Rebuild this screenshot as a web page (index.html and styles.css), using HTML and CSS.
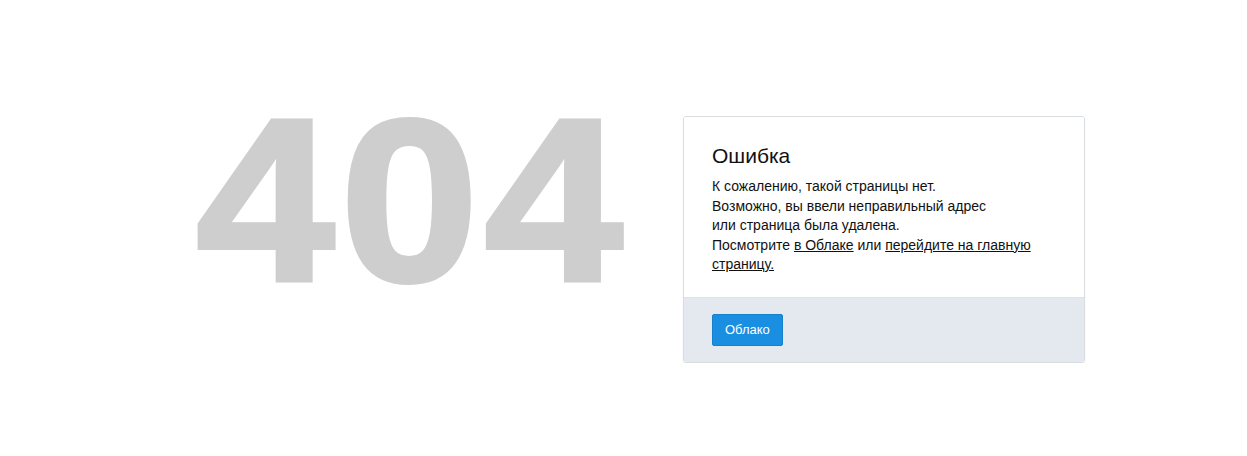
FILE: index.html
```html
<!DOCTYPE html>
<html lang="ru">
<head>
<meta charset="utf-8">
<title>404</title>
<link rel="stylesheet" href="styles.css">
</head>
<body>
<div class="page">
  <div class="code-box"><div class="code">404</div></div>
  <div class="card">
    <div class="card-body">
      <h1 class="title">Ошибка</h1>
      <p class="text">К сожалению, такой страницы нет.<br>Возможно, вы ввели неправильный адрес<br>или страница была удалена.<br>Посмотрите <a href="#">в Облаке</a> или <a href="#">перейдите на главную страницу.</a></p>
    </div>
    <div class="card-footer">
      <a class="btn" href="#">Облако</a>
    </div>
  </div>
</div>
</body>
</html>
```
FILE: styles.css
```css
html, body { margin: 0; padding: 0; background: #fff; }
body { font-family: "Liberation Sans", Arial, sans-serif; color: #222; }
.page {
  display: flex;
  align-items: flex-start;
  padding-top: 116px;
  padding-left: 193px;
}
.code-box {
  width: 490px;
  height: 180px;
  padding-left: 3px;
  box-sizing: border-box;
}
.code {
  font-family: "Liberation Sans", Arial, sans-serif;
  font-weight: bold;
  font-size: 232px;
  line-height: 1;
  letter-spacing: 5px;
  color: #cecece;
  -webkit-text-stroke: 4px #cecece;
  paint-order: stroke fill;
  margin-top: -31px;
  transform: scaleX(1.075);
  transform-origin: left top;
  white-space: nowrap;
}
.card {
  width: 400px;
  border: 1px solid #dadde0;
  border-radius: 3px;
  overflow: hidden;
  box-shadow: 0 1px 2px rgba(0,0,0,0.05);
}
.card-body {
  background: #fff;
  padding: 27px 28px 24px 28px;
  height: 129px;
}
.title {
  margin: 0 0 9px 0;
  font-weight: normal;
  font-size: 21px;
  line-height: 24px;
  color: #111;
}
.text {
  margin: 0;
  font-size: 14px;
  line-height: 19.5px;
  color: #111;
}
.text a { color: #111; text-decoration: underline; }
.card-footer {
  background: #e4e9ef;
  border-top: 1px solid #dde2e8;
  padding: 16px 28px;
  height: 32px;
}
.btn {
  display: inline-block;
  background: #1a8ee1;
  border: 1px solid #1580cc;
  border-radius: 2px;
  color: #fff;
  font-size: 13px;
  line-height: 30px;
  padding: 0 12px;
  text-decoration: none;
}
```
